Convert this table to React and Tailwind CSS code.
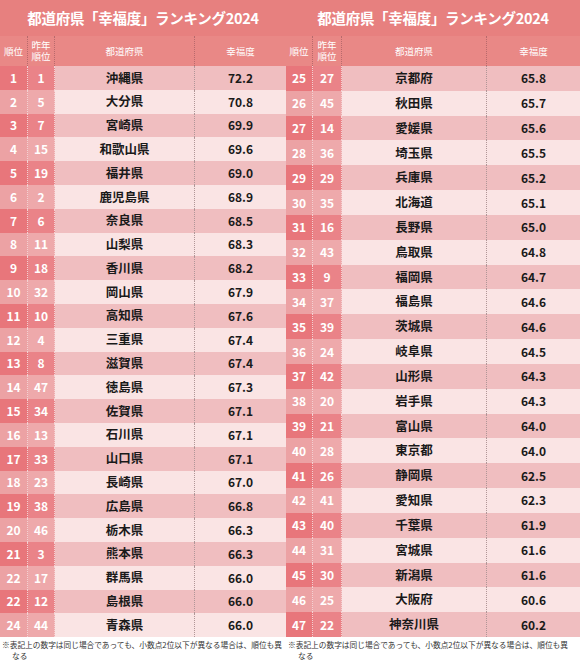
import React from "react";

const left = [
  [1, 1, "沖縄県", "72.2"],
  [2, 5, "大分県", "70.8"],
  [3, 7, "宮崎県", "69.9"],
  [4, 15, "和歌山県", "69.6"],
  [5, 19, "福井県", "69.0"],
  [6, 2, "鹿児島県", "68.9"],
  [7, 6, "奈良県", "68.5"],
  [8, 11, "山梨県", "68.3"],
  [9, 18, "香川県", "68.2"],
  [10, 32, "岡山県", "67.9"],
  [11, 10, "高知県", "67.6"],
  [12, 4, "三重県", "67.4"],
  [13, 8, "滋賀県", "67.4"],
  [14, 47, "徳島県", "67.3"],
  [15, 34, "佐賀県", "67.1"],
  [16, 13, "石川県", "67.1"],
  [17, 33, "山口県", "67.1"],
  [18, 23, "長崎県", "67.0"],
  [19, 38, "広島県", "66.8"],
  [20, 46, "栃木県", "66.3"],
  [21, 3, "熊本県", "66.3"],
  [22, 17, "群馬県", "66.0"],
  [22, 12, "島根県", "66.0"],
  [24, 44, "青森県", "66.0"],
];

const right = [
  [25, 27, "京都府", "65.8"],
  [26, 45, "秋田県", "65.7"],
  [27, 14, "愛媛県", "65.6"],
  [28, 36, "埼玉県", "65.5"],
  [29, 29, "兵庫県", "65.2"],
  [30, 35, "北海道", "65.1"],
  [31, 16, "長野県", "65.0"],
  [32, 43, "鳥取県", "64.8"],
  [33, 9, "福岡県", "64.7"],
  [34, 37, "福島県", "64.6"],
  [35, 39, "茨城県", "64.6"],
  [36, 24, "岐阜県", "64.5"],
  [37, 42, "山形県", "64.3"],
  [38, 20, "岩手県", "64.3"],
  [39, 21, "富山県", "64.0"],
  [40, 28, "東京都", "64.0"],
  [41, 26, "静岡県", "62.5"],
  [42, 41, "愛知県", "62.3"],
  [43, 40, "千葉県", "61.9"],
  [44, 31, "宮城県", "61.6"],
  [45, 30, "新潟県", "61.6"],
  [46, 25, "大阪府", "60.6"],
  [47, 22, "神奈川県", "60.2"],
];

function Panel({ rows, cols, rowH, width }) {
  return (
    <div className={`flex flex-col ${width}`}>
      <div className="h-[36px] bg-[#e7807f] flex items-center justify-center text-white font-bold text-[14.5px] tracking-[-0.3px]">
        都道府県「幸福度」ランキング2024
      </div>
      <div className={`grid ${cols} h-[30px] bg-[#e98886] text-white text-[9.5px]`}>
        <div className="flex items-center justify-center border-r border-dotted border-[#b86a6c]">順位</div>
        <div className="flex flex-col items-center justify-center leading-[11.5px] border-r border-dotted border-[#b86a6c]">
          <span>昨年</span>
          <span>順位</span>
        </div>
        <div className="flex items-center justify-center border-r border-dotted border-[#b86a6c]">都道府県</div>
        <div className="flex items-center justify-center">幸福度</div>
      </div>
      {rows.map((r, i) => {
        const odd = i % 2 === 0;
        return (
          <div key={i} className={`grid ${cols} ${rowH}`}>
            <div
              className={`flex items-center justify-center text-white font-bold text-[12px] border-r border-dotted border-[#f4d2d3] ${
                odd ? "bg-[#e8767b]" : "bg-[#eca2a4]"
              }`}
            >
              {r[0]}
            </div>
            <div
              className={`flex items-center justify-center text-white font-bold text-[12px] border-r border-dotted border-[#f4d2d3] ${
                odd ? "bg-[#ea8388]" : "bg-[#eea9ab]"
              }`}
            >
              {r[1]}
            </div>
            <div
              className={`flex items-center justify-center text-[#1a1a1a] font-bold text-[12.5px] border-r border-dotted border-[#b09697] ${
                odd ? "bg-[#f0bec0]" : "bg-[#fae4e4]"
              }`}
            >
              {r[2]}
            </div>
            <div
              className={`flex items-center justify-center text-[#1a1a1a] font-bold text-[12px] ${
                odd ? "bg-[#f0bec0]" : "bg-[#fae4e4]"
              }`}
            >
              {r[3]}
            </div>
          </div>
        );
      })}
      <div className="pt-[2px] pl-[2px] text-[7.7px] leading-[11px] text-[#333] whitespace-nowrap">
        <div>※表記上の数字は同じ場合であっても、小数点2位以下が異なる場合は、順位も異</div>
        <div className="pl-[10px]">なる</div>
      </div>
    </div>
  );
}

export default function App() {
  return (
    <div
      className="w-[580px] h-[665px] bg-white flex overflow-hidden"
      style={{ fontFamily: '"Noto Sans CJK JP", "Noto Sans", sans-serif' }}
    >
      <Panel rows={left} cols="grid-cols-[28px_27px_140px_91px]" rowH="h-[23.8px]" width="w-[286px]" />
      <Panel rows={right} cols="grid-cols-[27px_29px_145px_93px]" rowH="h-[24.83px]" width="w-[294px]" />
    </div>
  );
}
